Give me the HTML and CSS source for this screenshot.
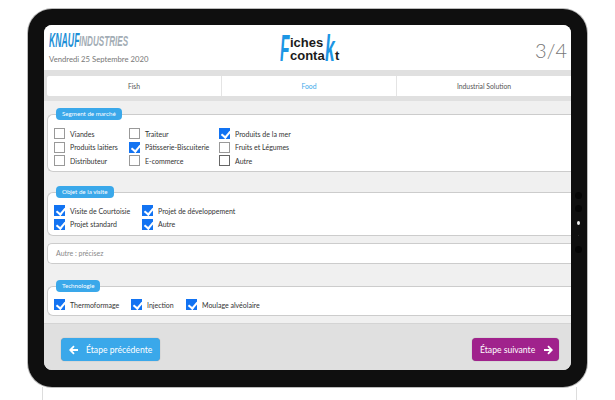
FILE: index.html
```html
<!DOCTYPE html>
<html lang="fr">
<head>
    <meta charset="UTF-8">
    <title>Fiches Contakt</title>
    <link rel="stylesheet" href="styles.css">
</head>
<body>
    <div class="tablet">
        <div class="sensors">
            <i></i><i></i><i class="lit"></i><i class="tiny"></i><i></i>
        </div>
        <div class="screen">
            <header class="top">
                <div class="brand">
                    <div class="knauf"><span class="knauf-a">KNAUF</span><span class="knauf-b">INDUSTRIES</span></div>
                    <p class="date">Vendredi 25 Septembre 2020</p>
                </div>
                <div class="fiches">
                    <span class="big-f">F</span>
                    <span class="fiches-mid">iches<br>conta</span>
                    <span class="big-k">k</span>
                    <span class="last-t">t</span>
                </div>
                <div class="step">3/4</div>
            </header>

            <nav class="tabs">
                <a>Fish</a>
                <a class="active">Food</a>
                <a>Industrial Solution</a>
            </nav>

            <main class="form">
                <section class="group segment">
                    <h3 class="pill">Segment de marché</h3>
                    <div class="checks">
                        <label><b class="box"></b>Viandes</label>
                        <label><b class="box"></b>Traiteur</label>
                        <label><b class="box on"></b>Produits de la mer</label>
                        <label><b class="box"></b>Produits laitiers</label>
                        <label><b class="box on"></b>Pâtisserie-Biscuiterie</label>
                        <label><b class="box"></b>Fruits et Légumes</label>
                        <label><b class="box"></b>Distributeur</label>
                        <label><b class="box"></b>E-commerce</label>
                        <label><b class="box dark"></b>Autre</label>
                    </div>
                </section>

                <section class="group objet">
                    <h3 class="pill">Objet de la visite</h3>
                    <div class="checks">
                        <label><b class="box on"></b>Visite de Courtoisie</label>
                        <label><b class="box on"></b>Projet de développement</label>
                        <label><b class="box on"></b>Projet standard</label>
                        <label><b class="box on"></b>Autre</label>
                    </div>
                </section>

                <div class="field">Autre : précisez</div>

                <section class="group techno">
                    <h3 class="pill">Technologie</h3>
                    <div class="checks">
                        <label><b class="box on"></b>Thermoformage</label>
                        <label><b class="box on"></b>Injection</label>
                        <label><b class="box on"></b>Moulage alvéolaire</label>
                    </div>
                </section>
            </main>

            <footer class="bottom">
                <a class="btn prev">
                    <svg width="10" height="10" viewBox="0 0 10 10"><path d="M9 5H1.5M5 1.2L1.2 5 5 8.8" fill="none" stroke="#fff" stroke-width="1.8"/></svg>
                    Étape précédente
                </a>
                <a class="btn next">
                    Étape suivante
                    <svg width="10" height="10" viewBox="0 0 10 10"><path d="M1 5h7.5M5 1.2L8.8 5 5 8.8" fill="none" stroke="#fff" stroke-width="1.8"/></svg>
                </a>
            </footer>
        </div>
    </div>
    <div class="sheet"></div>
</body>
</html>
```

FILE: styles.css
```css
* {
    margin: 0;
    padding: 0;
    box-sizing: border-box;
}
html, body {
    height: 400px;
    overflow: hidden;
}
body {
    background-color: #fff;
    padding-top: 9px;
    font-family: 'Lato', sans-serif;
    color: #333;
}
.tablet {
    position: relative;
    width: 559px;
    height: 378px;
    margin-left: 28px;
    padding: 16px;
    background-color: #0f0f0f;
    border-radius: 24px;
    box-shadow: 0 0 0 1px #bbb;
}
.sensors i {
    position: absolute;
    left: 547px;
    width: 7px;
    height: 7px;
    border-radius: 50%;
    background-color: #050505;
}
.sensors i:nth-child(1) { top: 183px; }
.sensors i:nth-child(2) { top: 196px; }
.sensors i:nth-child(3) { top: 212px; left: 549px; width: 3px; height: 4px; background-color: #eee; }
.sensors i:nth-child(4) { top: 226px; left: 550px; width: 1px; height: 1px; background-color: #333; }
.sensors i:nth-child(5) { top: 237px; }
.screen {
    display: flex;
    flex-direction: column;
    height: 345px;
    border-radius: 8px;
    overflow: hidden;
    background-color: #f0f0f0;
}

/* header */
.top {
    display: flex;
    flex: none;
    align-items: flex-start;
    height: 45px;
    background-color: #fff;
    padding: 6px 4px 0 5px;
}
.brand {
    flex: none;
    width: 231px;
}
.knauf {
    display: flex;
    height: 19px;
    font-family: 'Liberation Sans', sans-serif;
    font-style: italic;
    font-weight: bold;
}
.knauf-a {
    display: inline-block;
    width: 30px;
    margin-top: -4px;
    font-size: 15px;
    line-height: 17px;
    color: #1d8fd6;
    transform: scale(0.58, 1.4);
    transform-origin: 0 0;
}
.knauf-b {
    display: inline-block;
    width: 49px;
    margin-top: 2px;
    font-size: 15px;
    line-height: 15px;
    color: #a3adb5;
    transform: scale(0.54, 1);
    transform-origin: 0 0;
}
.date {
    margin-top: 4px;
    font-size: 7.7px;
    line-height: 11px;
    color: #777;
    white-space: nowrap;
}
.fiches {
    display: grid;
    flex: none;
    grid-template-columns: 10px 35px 10px 5px;
    margin-top: 4px;
    width: 60px;
    height: 27px;
    font-family: 'Liberation Sans', sans-serif;
    color: #1a1a1a;
}
.big-f, .big-k {
    font-style: italic;
    font-weight: bold;
    font-size: 37px;
    line-height: 27px;
    color: #1c96e4;
    transform-origin: 0 0;
}
.big-f { transform: scaleX(0.42); }
.big-k { transform: scaleX(0.47); }
.fiches-mid {
    font-size: 13px;
    line-height: 13px;
    font-weight: bold;
    padding-top: 1px;
}
.last-t {
    font-size: 13px;
    line-height: 13px;
    font-weight: bold;
    align-self: end;
}
.step {
    flex: 1;
    margin-top: 7px;
    text-align: right;
    font-size: 20px;
    line-height: 24px;
    font-weight: 300;
    color: #777;
}

/* tabs */
.tabs {
    display: flex;
    flex: none;
    height: 27px;
    padding: 6px 0 1px 3px;
    background-color: #e0e0e0;
}
.tabs a {
    flex: 1;
    background-color: #fff;
    border-left: 1px solid #e4e4e4;
    text-align: center;
    font-size: 6.8px;
    line-height: 20px;
    color: #555;
}
.tabs a:first-child {
    border-left: 0;
    border-radius: 2px 0 0 2px;
}
.tabs a.active {
    color: #3aa8ea;
}

/* form */
.form {
    flex: 1;
    padding: 13px 0 0 3px;
    border-top: 4px solid #e0e0e0;
}
.group {
    position: relative;
    background-color: #fff;
    border: 1px solid #ccc;
    border-right: 0;
    border-radius: 6px 0 0 6px;
    padding-left: 6px;
}
.pill {
    position: absolute;
    top: -7px;
    left: 8px;
    height: 12px;
    padding: 0 6px;
    border-radius: 4px;
    background-color: #3aa8ea;
    color: #fff;
    font-size: 6.2px;
    font-weight: normal;
    line-height: 12px;
    white-space: nowrap;
}
.checks {
    display: grid;
    row-gap: 2.5px;
    font-size: 7px;
}
.checks label {
    display: flex;
    align-items: center;
    gap: 5px;
    height: 11px;
    white-space: nowrap;
}
.box {
    position: relative;
    flex: none;
    width: 11px;
    height: 11px;
    background-color: #fff;
    border: 1px solid #999;
}
.box.dark {
    border-color: #666;
}
.box.on {
    background-color: #1273f2;
    border-color: #1273f2;
}
.box.on::after {
    content: "";
    position: absolute;
    left: 3px;
    top: 0;
    width: 4px;
    height: 7px;
    border: solid #fff;
    border-width: 0 2px 2px 0;
    transform: rotate(40deg);
}
.segment {
    height: 58px;
    padding-top: 13px;
}
.segment .checks {
    grid-template-columns: 75px 90px 1fr;
}
.objet {
    height: 44px;
    margin-top: 20px;
    padding-top: 12px;
}
.objet .checks {
    grid-template-columns: 88px 1fr;
}
.techno {
    height: 30px;
    margin-top: 22px;
    padding-top: 12px;
}
.techno .checks {
    grid-template-columns: 77px 55px 1fr;
}
.field {
    height: 21px;
    margin-top: 7px;
    padding-left: 8px;
    background-color: #fff;
    border: 1px solid #ccc;
    border-right: 0;
    border-radius: 5px 0 0 5px;
    font-size: 7px;
    line-height: 19px;
    color: #888;
}

/* footer */
.bottom {
    display: flex;
    flex: none;
    justify-content: space-between;
    height: 47px;
    padding: 14px 12px 0 17px;
    background-color: #e0e0e0;
    border-top: 1px solid #d4d4d4;
}
.btn {
    display: flex;
    align-items: center;
    height: 23px;
    border-radius: 4px;
    color: #fff;
    font-size: 8.6px;
    box-shadow: 0 0 1px rgba(0, 0, 0, 0.4);
}
.prev {
    width: 99px;
    gap: 7px;
    padding-left: 8px;
    background-color: #3aa8ea;
}
.next {
    width: 87px;
    gap: 8px;
    padding-left: 8px;
    background-color: #a0228c;
}

/* page behind the tablet */
.sheet {
    width: 535px;
    height: 13px;
    margin-left: 42px;
    border: solid #ddd;
    border-width: 0 1px;
}
```
